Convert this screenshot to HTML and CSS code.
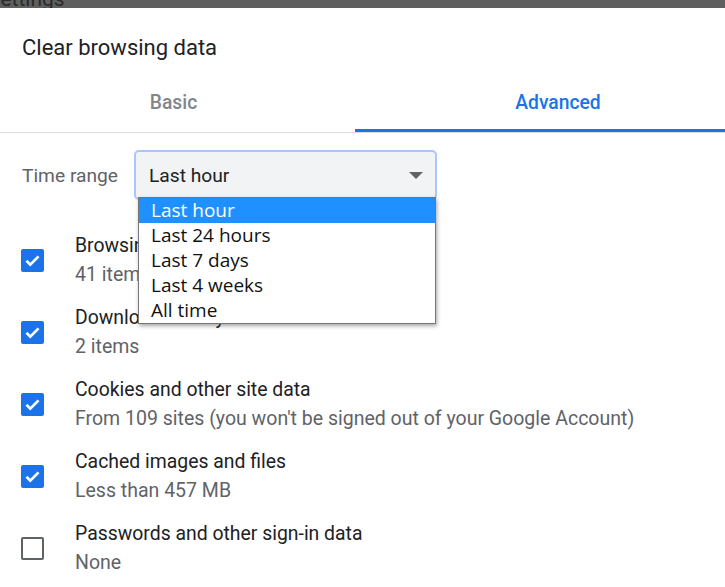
FILE: index.html
```html
<!DOCTYPE html>
<html lang="en">
<head>
<meta charset="UTF-8">
<title>Clear browsing data</title>
<link rel="stylesheet" href="styles.css">
</head>
<body>

  <div class="topbar"><span>Settings</span></div>

  <div class="dialog">
    <h2 class="title">Clear browsing data</h2>

    <div class="tabs">
      <div class="tab">Basic</div>
      <div class="tab active">Advanced</div>
    </div>

    <div class="range">
      <span class="range-label">Time range</span>
      <div class="select-wrap">
        <div class="select">
          <span>Last hour</span>
          <svg class="arrow" width="14" height="7" viewBox="0 0 14 7"><path d="M0 0h14L7 7z" fill="#5f6368"/></svg>
        </div>
        <!-- open dropdown list -->
        <ul class="options">
          <li class="selected">Last hour</li>
          <li>Last 24 hours</li>
          <li>Last 7 days</li>
          <li>Last 4 weeks</li>
          <li>All time</li>
        </ul>
      </div>
    </div>

    <div class="items">
      <div class="item">
        <span class="box checked"><svg width="17" height="17" viewBox="0 0 16 16"><path d="M2.3 8.3l3.6 3.6 7.8-7.8" fill="none" stroke="#fff" stroke-width="2.6"/></svg></span>
        <div class="text">
          <div class="name">Browsing history</div>
          <div class="desc">41 items</div>
        </div>
      </div>
      <div class="item">
        <span class="box checked"><svg width="17" height="17" viewBox="0 0 16 16"><path d="M2.3 8.3l3.6 3.6 7.8-7.8" fill="none" stroke="#fff" stroke-width="2.6"/></svg></span>
        <div class="text">
          <div class="name">Download history</div>
          <div class="desc">2 items</div>
        </div>
      </div>
      <div class="item">
        <span class="box checked"><svg width="17" height="17" viewBox="0 0 16 16"><path d="M2.3 8.3l3.6 3.6 7.8-7.8" fill="none" stroke="#fff" stroke-width="2.6"/></svg></span>
        <div class="text">
          <div class="name">Cookies and other site data</div>
          <div class="desc">From 109 sites (you won't be signed out of your Google Account)</div>
        </div>
      </div>
      <div class="item">
        <span class="box checked"><svg width="17" height="17" viewBox="0 0 16 16"><path d="M2.3 8.3l3.6 3.6 7.8-7.8" fill="none" stroke="#fff" stroke-width="2.6"/></svg></span>
        <div class="text">
          <div class="name">Cached images and files</div>
          <div class="desc">Less than 457 MB</div>
        </div>
      </div>
      <div class="item">
        <span class="box"></span>
        <div class="text">
          <div class="name">Passwords and other sign-in data</div>
          <div class="desc">None</div>
        </div>
      </div>
    </div>
  </div>

</body>
</html>
```

FILE: styles.css
```css
/* Page */
body {
  margin: 0;
  font-family: Roboto, "Liberation Sans", sans-serif;
  background-color: #fff;
  color: #202124;
  overflow: hidden;
}

.topbar {
  height: 8px;
  overflow: hidden;
  background-color: #5f5f5f;
}

.topbar span {
  display: block;
  margin: -13px 0 0 -12px;
  font-size: 21px;
  color: #2a2a2a;
}

/* Dialog */
.dialog {
  background-color: #fff;
}

.title {
  margin: 0;
  padding: 27px 22px 0;
  height: 46px;
  font-size: 22px;
  font-weight: 400;
  line-height: 26px;
}

/* Tabs */
.tabs {
  display: flex;
  width: 761px;
  border-bottom: 1px solid #dadce0;
}

.tab {
  flex: none;
  text-align: center;
  height: 51px;
  line-height: 44px;
  font-size: 19.3px;
  font-weight: 500;
  color: #80868b;
  box-sizing: border-box;
}

.tab:first-child {
  width: 347px;
}

.tab.active {
  width: 406px;
  margin-left: 8px;
  color: #1a73e8;
  border-bottom: 3px solid #1a73e8;
}

/* Time range */
.range {
  display: flex;
  align-items: center;
  padding: 17px 0 0 22px;
}

.range-label {
  font-size: 19.2px;
  color: #5f6368;
  width: 112px;
}

.select-wrap {
  position: relative;
}

.select {
  display: flex;
  align-items: center;
  justify-content: space-between;
  width: 303px;
  height: 50px;
  padding: 0 12px 0 13px;
  box-sizing: border-box;
  background-color: #f1f3f4;
  border: 2px solid #a8c7fa;
  border-radius: 5px;
  font-size: 19.2px;
  color: #202124;
}

.arrow {
  margin-top: 1px;
}

.options {
  position: absolute;
  left: 4px;
  top: 47px;
  width: 298px;
  margin: 0;
  padding: 0;
  list-style: none;
  background-color: #fff;
  border: 1px solid #767676;
  box-sizing: border-box;
  box-shadow: 1px 2px 4px rgba(0, 0, 0, 0.35);
  font-family: "Open Sans", "Noto Sans", sans-serif;
  font-size: 19px;
}

.options li {
  height: 25px;
  line-height: 24px;
  padding-left: 12px;
  color: #111;
}

.options li.selected {
  background-color: #1e90ff;
  color: #fff;
}

/* Checkbox rows */
.items {
  padding: 25px 0 0 21px;
}

.item {
  display: flex;
  align-items: center;
  height: 71.8px;
}

.box {
  flex: none;
  display: flex;
  align-items: center;
  justify-content: center;
  width: 23px;
  height: 23px;
  box-sizing: border-box;
  border: 2.5px solid #5f6368;
  border-radius: 2px;
  margin-right: 31px;
}

.box.checked {
  background-color: #1a73e8;
  border-color: #1a73e8;
}

.name {
  font-size: 19.4px;
  line-height: 24px;
  color: #202124;
}

.desc {
  font-size: 19.5px;
  line-height: 24px;
  margin-top: 5px;
  color: #5f6368;
}
```
